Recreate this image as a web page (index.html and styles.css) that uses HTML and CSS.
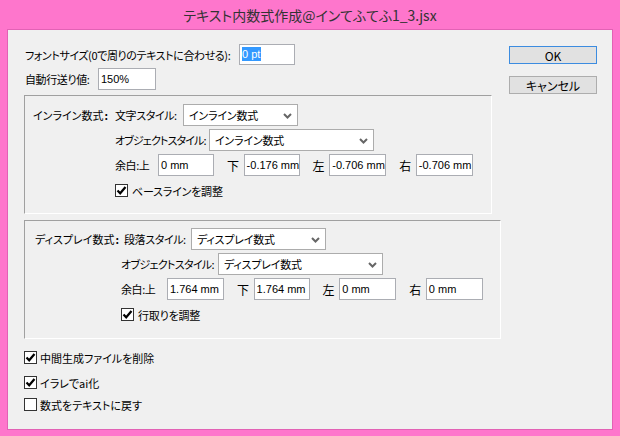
FILE: index.html
```html
<!DOCTYPE html>
<html lang="ja">
<head>
<meta charset="utf-8">
<title>テキスト内数式作成@インてふてふ1_3.jsx</title>
<link rel="stylesheet" href="styles.css">
</head>
<body>
<div class="window">
  <div class="titlebar">テキスト内数式作成@インてふてふ1_3.jsx</div>
  <div class="client">
    <div class="main">
      <div class="row r1">
        <span class="lbl l-font">フォントサイズ(0で周りのテキストに合わせる):</span>
        <span class="field w56"><span class="selected">0 pt</span></span>
      </div>
      <div class="row r2">
        <span class="lbl l-lead">自動行送り値:</span>
        <span class="field w58">150%</span>
      </div>

      <div class="group inline">
        <span class="gtitle">インライン数式<span class="colon">:</span></span>
        <div class="gline">
          <span class="lbl l-char">文字スタイル:</span>
          <span class="select s-char">インライン数式<svg class="chev" width="9" height="6" viewBox="0 0 9 6"><path d="M1 1 L4.5 4.5 L8 1" fill="none" stroke="#666" stroke-width="2"/></svg></span>
        </div>
        <div class="gline col2">
          <span class="lbl l-obj-i">オブジェクトスタイル:</span>
          <span class="select s-obj">インライン数式<svg class="chev" width="9" height="6" viewBox="0 0 9 6"><path d="M1 1 L4.5 4.5 L8 1" fill="none" stroke="#666" stroke-width="2"/></svg></span>
        </div>
        <div class="gline col2">
          <span class="lbl l-top-i">余白:上</span>
          <span class="field w56">0 mm</span>
          <span class="side-lbl">下</span>
          <span class="field w56">-0.176 mm</span>
          <span class="side-lbl">左</span>
          <span class="field w57">-0.706 mm</span>
          <span class="side-lbl">右</span>
          <span class="field w57">-0.706 mm</span>
        </div>
        <label class="cb col2 gcheck"><span class="box"><svg width="11" height="11" viewBox="0 0 11 11"><path d="M1.5 5.5 L4.2 8.3 L9.5 2" fill="none" stroke="#000" stroke-width="2.2"/></svg></span>ベースラインを調整</label>
      </div>

      <div class="group display">
        <span class="gtitle">ディスプレイ数式<span class="colon">:</span></span>
        <div class="gline">
          <span class="lbl l-para">段落スタイル:</span>
          <span class="select s-para">ディスプレイ数式<svg class="chev" width="9" height="6" viewBox="0 0 9 6"><path d="M1 1 L4.5 4.5 L8 1" fill="none" stroke="#666" stroke-width="2"/></svg></span>
        </div>
        <div class="gline col2">
          <span class="lbl l-obj-d">オブジェクトスタイル:</span>
          <span class="select s-obj">ディスプレイ数式<svg class="chev" width="9" height="6" viewBox="0 0 9 6"><path d="M1 1 L4.5 4.5 L8 1" fill="none" stroke="#666" stroke-width="2"/></svg></span>
        </div>
        <div class="gline col2">
          <span class="lbl l-top-d">余白:上</span>
          <span class="field w57">1.764 mm</span>
          <span class="side-lbl">下</span>
          <span class="field w56">1.764 mm</span>
          <span class="side-lbl">左</span>
          <span class="field w57">0 mm</span>
          <span class="side-lbl">右</span>
          <span class="field w57">0 mm</span>
        </div>
        <label class="cb col2 gcheck"><span class="box"><svg width="11" height="11" viewBox="0 0 11 11"><path d="M1.5 5.5 L4.2 8.3 L9.5 2" fill="none" stroke="#000" stroke-width="2.2"/></svg></span>行取りを調整</label>
      </div>

      <div class="options">
        <label class="cb opt1"><span class="box"><svg width="11" height="11" viewBox="0 0 11 11"><path d="M1.5 5.5 L4.2 8.3 L9.5 2" fill="none" stroke="#000" stroke-width="2.2"/></svg></span>中間生成ファイルを削除</label>
        <label class="cb opt2"><span class="box"><svg width="11" height="11" viewBox="0 0 11 11"><path d="M1.5 5.5 L4.2 8.3 L9.5 2" fill="none" stroke="#000" stroke-width="2.2"/></svg></span>イラレでai化</label>
        <label class="cb opt3"><span class="box"></span>数式をテキストに戻す</label>
      </div>
    </div>

    <div class="buttons">
      <span class="btn default">OK</span>
      <span class="btn">キャンセル</span>
    </div>
  </div>
</div>
</body>
</html>
```

FILE: styles.css
```css
body {
  margin: 0;
}

.window {
  width: 620px;
  height: 436px;
  box-sizing: border-box;
  background: #fe76cc;
  padding: 0 7px 6px 7px;
  display: flex;
  flex-direction: column;
}

.titlebar {
  height: 29px;
  flex: none;
  display: flex;
  align-items: center;
  justify-content: center;
  font-family: "Noto Sans CJK JP", sans-serif;
  font-feature-settings: "palt";
  font-size: 14px;
  color: #333;
}

.client {
  flex: 1;
  display: flex;
  border: 1px solid #e262b5;
  background: #f0f0f0;
  font-family: "Noto Sans CJK JP", sans-serif;
  font-feature-settings: "palt";
  font-size: 11px;
  letter-spacing: -0.4px;
  color: #000;
}

.main {
  padding: 14px 0 0 16px;
  width: 477px;
}

.row {
  display: flex;
  align-items: center;
  padding-left: 1px;
}

.r1 { height: 21px; }
.r2 { height: 22px; margin-top: 3px; }

.lbl {
  white-space: nowrap;
  flex: none;
}

/* label widths set the column where each control starts */
.l-font { width: 214px; }
.l-lead { width: 73px; }
.l-char { width: 68px; }
.l-obj-i { width: 94px; letter-spacing: -0.9px; }
.l-top-i { width: 43px; }
.l-para { width: 67px; margin-left: 3px; }
.l-obj-d { width: 97px; letter-spacing: -0.7px; }
.l-top-d { width: 46px; }

.field {
  box-sizing: border-box;
  height: 22px;
  flex: none;
  border: 1px solid #abadb3;
  background: #fff;
  font-family: "Liberation Sans", sans-serif;
  font-size: 11px;
  letter-spacing: 0;
  line-height: 20px;
  padding-left: 2px;
  white-space: nowrap;
  overflow: hidden;
}

.r1 .field { height: 21px; line-height: 19px; }

.w56 { width: 56px; }
.w57 { width: 57px; }
.w58 { width: 58px; }

.selected {
  background: #3399ff;
  color: #fff;
  padding: 1px 1px 1px 0;
}

/* etched frames around the two formula sections */
.group {
  box-sizing: border-box;
  height: 119px;
  border-top: 1px solid #a0a0a0;
  border-left: 1px solid #a0a0a0;
  border-right: 1px solid #fff;
  border-bottom: 1px solid #fff;
  display: grid;
  grid-template-rows: 22px 22px 22px 13px;
  align-items: center;
  row-gap: 3px;
}

.inline {
  width: 468px;
  margin-top: 5px;
  padding: 8px 0 0 8px;
  grid-template-columns: 82px auto;
}

.display {
  width: 477px;
  margin-top: 6px;
  padding: 7px 0 0 10px;
  grid-template-columns: 86px auto;
}

.gtitle {
  grid-column: 1;
  grid-row: 1;
  white-space: nowrap;
  letter-spacing: 0;
}

/* bold colon after the section names */
.colon {
  font-weight: bold;
  margin-left: 1px;
}

.gline {
  display: flex;
  align-items: center;
  height: 22px;
}

.col2 {
  grid-column: 2;
}

.gcheck {
  margin-top: 5px;
  align-self: start;
}

.select {
  box-sizing: border-box;
  position: relative;
  height: 22px;
  border: 1px solid #acacac;
  background: #fff;
  padding-left: 5px;
  line-height: 20px;
  font-size: 11px;
  letter-spacing: -0.2px;
  white-space: nowrap;
}

.chev {
  position: absolute;
  right: 5px;
  top: 8px;
}

.s-char { width: 115px; }
.s-para { width: 135px; }
.s-obj { width: 165px; }

.side-lbl {
  margin: 0 5px 0 13px;
  font-size: 12px;
}

.cb {
  display: flex;
  align-items: center;
  gap: 4px;
  height: 13px;
  white-space: nowrap;
  font-size: 11px;
  letter-spacing: -0.2px;
}

.box {
  box-sizing: border-box;
  width: 13px;
  height: 13px;
  flex: none;
  border: 1px solid #333;
  background: #fff;
  display: flex;
  align-items: center;
  justify-content: center;
}

.options .cb { gap: 3px; letter-spacing: 0; }
.opt1 { margin-top: 12px; }
.opt2 { margin-top: 12px; }
.opt3 { margin-top: 9px; }

.buttons {
  margin-left: auto;
  padding: 16px 15px 0 0;
  display: flex;
  flex-direction: column;
  gap: 12px;
}

.btn {
  box-sizing: border-box;
  width: 88px;
  height: 18px;
  border: 1px solid #adadad;
  background: #e1e1e1;
  display: flex;
  align-items: center;
  justify-content: center;
  font-size: 12px;
  letter-spacing: 0;
}

.btn.default {
  border-color: #3c8ce0;
}
```
